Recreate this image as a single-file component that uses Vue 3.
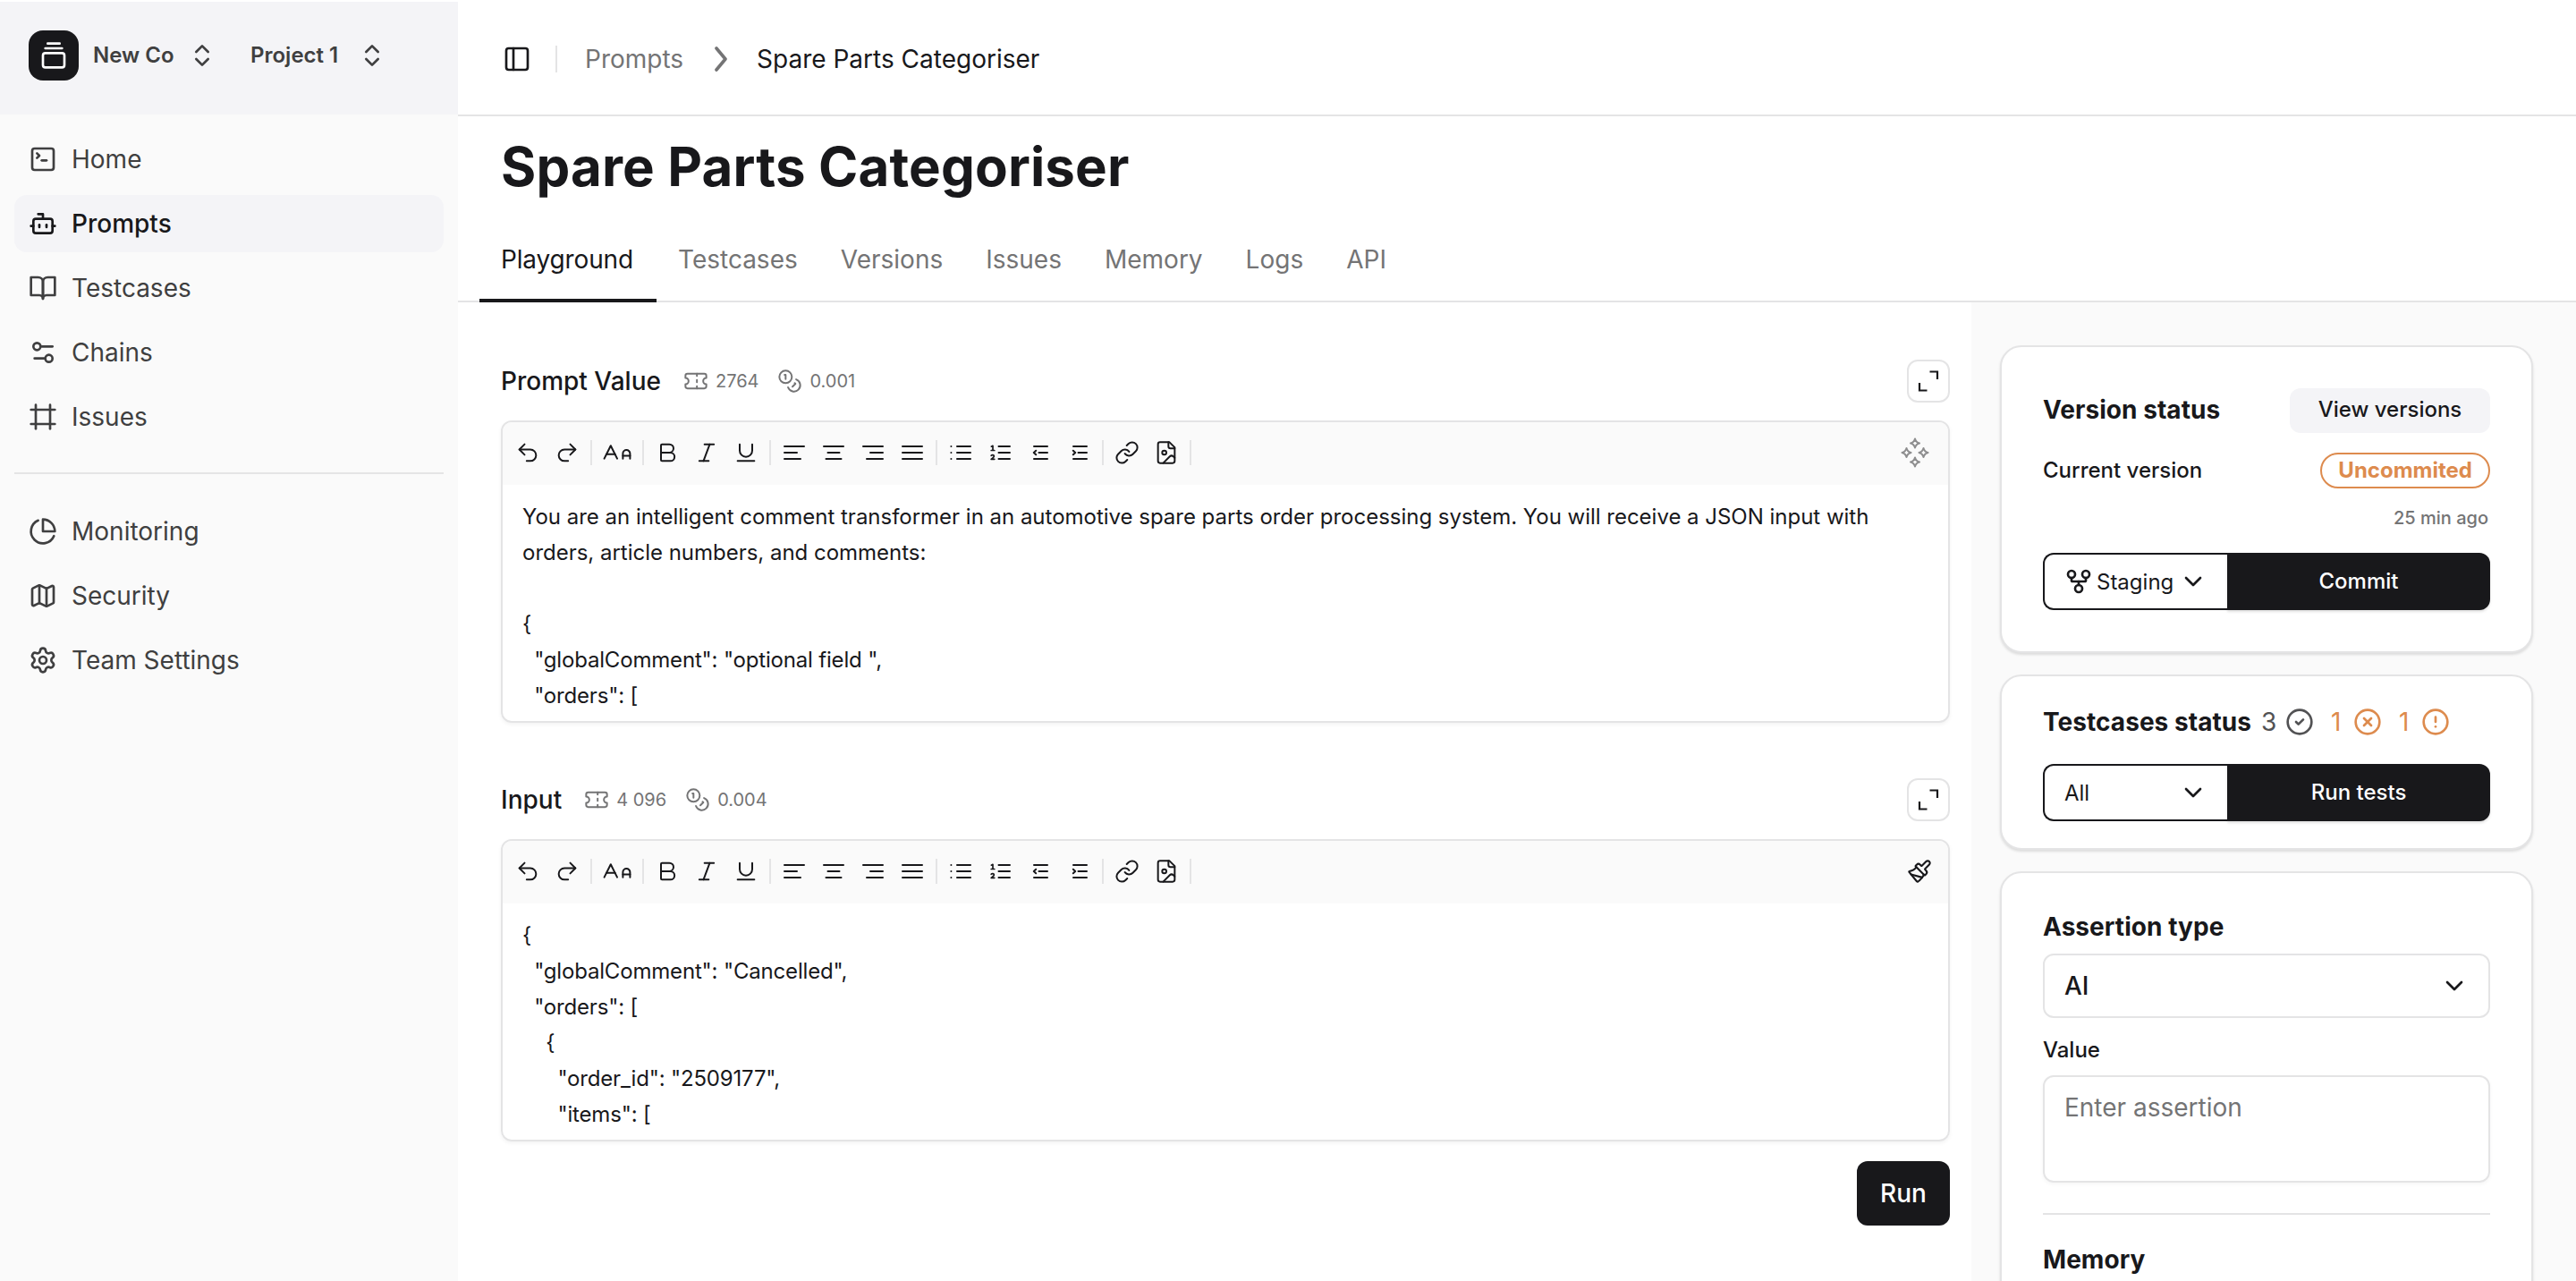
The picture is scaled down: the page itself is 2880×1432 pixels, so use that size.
<script setup>
import { h } from 'vue'

const icons = {
  stack: '<path d="M7 2h10"/><path d="M5 6h14"/><rect width="18" height="12" x="3" y="10" rx="2"/>',
  updown: '<path d="m7 15 5 5 5-5"/><path d="m7 9 5-5 5 5"/>',
  home: '<path d="m7 11 2-2-2-2"/><path d="M11 13h4"/><rect width="18" height="18" x="3" y="3" rx="2"/>',
  bot: '<path d="M12 8V4H8"/><rect width="16" height="12" x="4" y="8" rx="2"/><path d="M2 14h2"/><path d="M20 14h2"/><path d="M15 13v2"/><path d="M9 13v2"/>',
  book: '<path d="M2 3h6a4 4 0 0 1 4 4v14a3 3 0 0 0-3-3H2z"/><path d="M22 3h-6a4 4 0 0 0-4 4v14a3 3 0 0 1 3-3h7z"/>',
  chains: '<path d="M20 7h-9"/><path d="M14 17H5"/><circle cx="17" cy="17" r="3"/><circle cx="7" cy="7" r="3"/>',
  frame: '<path d="M22 6H2"/><path d="M22 18H2"/><path d="M6 2v20"/><path d="M18 2v20"/>',
  pie: '<path d="M21.21 15.89A10 10 0 1 1 8 2.83"/><path d="M22 12A10 10 0 0 0 12 2v10z"/>',
  map: '<path d="M14.106 5.553a2 2 0 0 0 1.788 0l3.659-1.83A1 1 0 0 1 21 4.619v12.764a1 1 0 0 1-.553.894l-4.553 2.277a2 2 0 0 1-1.788 0l-4.212-2.106a2 2 0 0 0-1.788 0l-3.659 1.83A1 1 0 0 1 3 19.381V6.618a1 1 0 0 1 .553-.894l4.553-2.277a2 2 0 0 1 1.788 0z"/><path d="M15 5.764v15"/><path d="M9 3.236v15"/>',
  gear: '<path d="M9.671 4.136a2.34 2.34 0 0 1 4.659 0 2.34 2.34 0 0 0 3.319 1.915 2.34 2.34 0 0 1 2.33 4.033 2.34 2.34 0 0 0 0 3.831 2.34 2.34 0 0 1-2.33 4.033 2.34 2.34 0 0 0-3.319 1.915 2.34 2.34 0 0 1-4.659 0 2.34 2.34 0 0 0-3.32-1.915 2.34 2.34 0 0 1-2.33-4.033 2.34 2.34 0 0 0 0-3.831A2.34 2.34 0 0 1 6.35 6.051a2.34 2.34 0 0 0 3.319-1.915"/><circle cx="12" cy="12" r="3"/>',
  panel: '<rect width="18" height="18" x="3" y="3" rx="2"/><path d="M9 3v18"/>',
  chevRight: '<path d="m2 2 10 12L2 26"/>',
  ticket: '<path d="M2 9a3 3 0 0 1 0 6v2a2 2 0 0 0 2 2h16a2 2 0 0 0 2-2v-2a3 3 0 0 1 0-6V7a2 2 0 0 0-2-2H4a2 2 0 0 0-2 2Z"/><path d="M13 5v2"/><path d="M13 17v2"/><path d="M13 11v2"/>',
  coins: '<circle cx="8" cy="8" r="6"/><path d="M18.09 10.37A6 6 0 1 1 10.34 18"/><path d="M7 6h1v4"/><path d="m16.71 13.88.7.71-2.82 2.82"/>',
  undo: '<path d="M9 14 4 9l5-5"/><path d="M4 9h10.5a5.5 5.5 0 0 1 0 11H11"/>',
  redo: '<path d="m15 14 5-5-5-5"/><path d="M20 9H9.5a5.5 5.5 0 0 0 0 11H13"/>',
  aa: '<path d="M21 14h-5"/><path d="M16 16v-3.5a2.5 2.5 0 0 1 5 0V16"/><path d="M4.5 13h6"/><path d="m3 16 4.5-9 4.5 9"/>',
  bold: '<path d="M6 12h9a4 4 0 0 1 0 8H7a1 1 0 0 1-1-1V5a1 1 0 0 1 1-1h7a4 4 0 0 1 0 8"/>',
  italic: '<path d="M19 4h-9"/><path d="M14 20H5"/><path d="M15 4 9 20"/>',
  underline: '<path d="M6 4v6a6 6 0 0 0 12 0V4"/><path d="M4 20h16"/>',
  left: '<path d="M3 7h22M3 14h14M3 21h18"/>',
  center: '<path d="M3 7h22M7.5 14h13M5.500 21h17"/>',
  right: '<path d="M3 7h22M11 14h14M7 21h18"/>',
  justify: '<path d="M3 7h22M3 14h22M3 21h22"/>',
  ul: '<path d="M10 7h15M10 14h15M10 21h15M3.400 7h.01M3.400 14h.01M3.400 21h.01"/>',
  ol: '<path d="M12.500 7h12.500M12.500 14h12.500M12.500 21h12.500"/><path stroke-width="1.700" d="M4.300 7.200 6 6.300v5M4.200 11.500h3.600M4.200 17.300c.8-1 3.200-.8 3.200.6 0 1.200-1.600 1.900-3.200 3.400h3.600"/>',
  outdent: '<path d="M8 7h15M13.500 14H23M8 21h15M10.200 11.800 7.800 14l2.400 2.200"/>',
  indent: '<path d="M8 7h15M13.500 14H23M8 21h15M7.800 11.800l2.400 2.200-2.400 2.200"/>',
  link: '<path d="M10 13a5 5 0 0 0 7.540.54l3-3a5 5 0 0 0-7.070-7.070l-1.720 1.710"/><path d="M14 11a5 5 0 0 0-7.540-.54l-3 3a5 5 0 0 0 7.070 7.070l1.710-1.710"/>',
  image: '<path d="M15 2H6a2 2 0 0 0-2 2v16a2 2 0 0 0 2 2h12a2 2 0 0 0 2-2V7Z"/><path d="M14 2v4a2 2 0 0 0 2 2h4"/><circle cx="10" cy="12" r="2"/><path d="m20 17-1.296-1.296a2.410 2.410 0 0 0-3.408 0L9 22"/>',
  sparkles: '<path d="M19 3.500q1 4 5 5-4 1-5 5-1-4-5-5 4-1 5-5ZM19 24.500q1 4 5 5-4 1-5 5-1-4-5-5 4-1 5-5ZM9.500 14q1 4 5 5-4 1-5 5-1-4-5-5 4-1 5-5ZM28.500 14q1 4 5 5-4 1-5 5-1-4-5-5 4-1 5-5Z"/>',
  brush: '<path d="m14.622 17.897-10.680-2.913"/><path d="M18.376 2.622a1 1 0 1 1 3.002 3.002L17.360 9.643a.5.5 0 0 0 0 .707l.944.944a2.410 2.410 0 0 1 0 3.408l-.944.944a.5.5 0 0 1-.707 0L8.354 7.348a.5.5 0 0 1 0-.707l.944-.944a2.410 2.410 0 0 1 3.408 0l.944.944a.5.5 0 0 0 .707 0z"/><path d="M9 8c-1.804 2.710-3.970 3.460-6.583 3.948a.507.507 0 0 0-.302.819l7.320 8.883a1 1 0 0 0 1.185.204C12.735 20.405 16 16.792 16 15"/>',
  expand: '<path d="M13.500 2H22v8.500M2 14.500V23h8.500"/>',
  fork: '<circle cx="12" cy="18" r="3"/><circle cx="6" cy="6" r="3"/><circle cx="18" cy="6" r="3"/><path d="M18 9v2c0 .6-.4 1-1 1H7c-.6 0-1-.4-1-1V9"/><path d="M12 12v3"/>',
  chevDown: '<path d="m6 9 6 6 6-6"/>',
  check: '<circle cx="12" cy="12" r="10"/><path d="m9 12 2 2 4-4"/>',
  cross: '<circle cx="12" cy="12" r="10"/><path d="m15 9-6 6"/><path d="m9 9 6 6"/>',
  alert: '<circle cx="12" cy="12" r="10"/><path d="M12 8v4"/><path d="M12 16h.01"/>',
}

// w/hgt: drawn size in px, sw: stroke width in viewBox units
const Icon = ({ name, w = 32, hgt = w, vb = '0 0 24 24', sw = 2, cap = 'round' }) =>
  h('svg', {
    class: 'icon', width: w, height: hgt, viewBox: vb, fill: 'none',
    stroke: 'currentColor', 'stroke-width': sw, 'stroke-linecap': cap,
    'stroke-linejoin': cap === 'round' ? 'round' : 'miter',
    style: 'flex:none;display:block', innerHTML: icons[name],
  })
Icon.props = ['name', 'w', 'hgt', 'vb', 'sw', 'cap']

const nav = [
  { label: 'Home', icon: 'home' },
  { label: 'Prompts', icon: 'bot', active: true },
  { label: 'Testcases', icon: 'book' },
  { label: 'Chains', icon: 'chains' },
  { label: 'Issues', icon: 'frame' },
]
const nav2 = [
  { label: 'Monitoring', icon: 'pie' },
  { label: 'Security', icon: 'map' },
  { label: 'Team Settings', icon: 'gear' },
]
const tabs = ['Playground', 'Testcases', 'Versions', 'Issues', 'Memory', 'Logs', 'API']

const a = (name) => ({ name, w: 28, sw: 1.7 })
const b = (name) => ({ name, w: 28, vb: '0 0 28 28', sw: 2 })
const tools = [
  [a('undo'), a('redo')],
  [{ name: 'aa', w: 32, hgt: 20, vb: '2 5.600 20 12.500', sw: 1.25 }],
  [a('bold'), a('italic'), a('underline')],
  [b('left'), b('center'), b('right'), b('justify')],
  [b('ul'), b('ol'), b('outdent'), b('indent')],
  [a('link'), a('image')],
]

const editors = [
  {
    title: 'Prompt Value', tokens: '2764', cost: '0.001',
    action: { name: 'sparkles', w: 38, vb: '0 0 38 38', sw: 2 }, muted: true,
    prose: 'You are an intelligent comment transformer in an automotive spare parts order processing system. You will receive a JSON input with orders, article numbers, and comments:\n\n',
    json: '{\n  "globalComment": "optional field ",\n  "orders": [',
  },
  {
    title: 'Input', tokens: '4 096', cost: '0.004',
    action: { name: 'brush', w: 28, sw: 1.8 }, muted: false,
    prose: '',
    json: '{\n  "globalComment": "Cancelled",\n  "orders": [\n    {\n      "order_id": "2509177",\n      "items": [',
  },
]
</script>

<template>
  <div class="app">
    <aside class="sidebar">
      <header class="switcher">
        <span class="logo"><Icon name="stack" /></span>
        <button class="switch company"><span>New Co</span><Icon name="updown" /></button>
        <button class="switch project"><span>Project 1</span><Icon name="updown" /></button>
      </header>
      <nav class="nav">
        <a v-for="n in nav" :key="n.label" class="nav-item" :class="{ active: n.active }">
          <Icon :name="n.icon" />{{ n.label }}
        </a>
      </nav>
      <hr class="nav-sep" />
      <nav class="nav second">
        <a v-for="n in nav2" :key="n.label" class="nav-item"><Icon :name="n.icon" />{{ n.label }}</a>
      </nav>
    </aside>

    <div class="page">
      <header class="crumbs">
        <Icon name="panel" />
        <i class="crumb-sep"></i>
        <span class="crumb muted">Prompts</span>
        <Icon class="crumb-chev" name="chevRight" :w="18" :hgt="28" vb="-1 0 18 28" :sw="3.6" />
        <span class="crumb">Spare Parts Categoriser</span>
      </header>

      <section class="heading">
        <h1>Spare Parts Categoriser</h1>
        <div class="tabs">
          <a v-for="(t, i) in tabs" :key="t" class="tab" :class="{ active: i === 0 }">{{ t }}</a>
        </div>
      </section>

      <div class="body">
        <main class="work">
          <section v-for="e in editors" :key="e.title" class="block">
            <div class="block-head">
              <h2>{{ e.title }}</h2>
              <span class="stat"><Icon name="ticket" :w="28" :sw="1.7" />{{ e.tokens }}</span>
              <span class="stat cost"><Icon name="coins" :w="28" :sw="1.7" />{{ e.cost }}</span>
              <button class="expand"><Icon name="expand" :w="24" :hgt="24" vb="0 .5 24 24" :sw="2.2" cap="butt" /></button>
            </div>
            <div class="editor">
              <div class="toolbar">
                <div v-for="(g, gi) in tools" :key="gi" class="group">
                  <Icon v-for="t in g" :key="t.name" v-bind="t" />
                </div>
                <span class="action" :class="{ dim: e.muted }"><Icon v-bind="e.action" /></span>
              </div>
              <div class="text"><span class="prose">{{ e.prose }}</span><span class="json">{{ e.json }}</span></div>
            </div>
          </section>
          <button class="run">Run</button>
        </main>

        <aside class="panel">
          <section class="card version">
            <div class="row">
              <h3>Version status</h3>
              <button class="view">View versions</button>
            </div>
            <div class="row current">
              <span class="label">Current version</span>
              <span class="badge">Uncommited</span>
            </div>
            <div class="ago">25 min ago</div>
            <div class="split">
              <button class="pick"><span class="branch"><Icon name="fork" />Staging</span><Icon name="chevDown" /></button>
              <button class="go">Commit</button>
            </div>
          </section>

          <section class="card tests">
            <div class="row status">
              <h3>Testcases status</h3>
              <span class="count ok">3<Icon name="check" /></span>
              <span class="count bad">1<Icon name="cross" /></span>
              <span class="count bad">1<Icon name="alert" /></span>
            </div>
            <div class="split">
              <button class="pick">All<Icon name="chevDown" /></button>
              <button class="go">Run tests</button>
            </div>
          </section>

          <section class="card assertion">
            <h3>Assertion type</h3>
            <div class="select">AI<Icon name="chevDown" /></div>
            <div class="label">Value</div>
            <div class="area">Enter assertion</div>
            <hr />
            <h3>Memory</h3>
          </section>
        </aside>
      </div>
    </div>
  </div>
</template>

<style>
html, body { margin: 0; background: #fff; overflow: hidden; }
</style>

<style scoped>
* { box-sizing: border-box; }
.app {
  width: 2880px; height: 1432px; padding-top: 2px; overflow: hidden;
  display: flex; background: #fff; color: #18181b;
  font-family: Inter, "Liberation Sans", sans-serif; font-size: 28px;
}
button { font: inherit; color: inherit; border: 0; background: none; padding: 0; margin: 0; }
h1, h2, h3, hr { margin: 0; border: 0; }

.sidebar { width: 512px; flex: none; background: #fafafa; }
.switcher {
  height: 126px; padding: 32px 32px 0; display: flex; align-items: flex-start;
  background: #f4f4f7;
}
.logo {
  width: 56px; height: 56px; border-radius: 16px; background: #18181b; color: #fff;
  display: flex; align-items: center; justify-content: center;
}
.switch {
  display: flex; align-items: center; justify-content: space-between; height: 56px;
  font-size: 24px; font-weight: 600; color: #3f3f40; white-space: nowrap;
}
.switch span { padding-bottom: 2px; }
.company { margin-left: 16px; width: 138px; }
.project { margin-left: 38px; width: 152px; }
.nav { padding: 18px 16px 0; display: flex; flex-direction: column; gap: 8px; }
.nav.second { padding-top: 32px; }
.nav-item {
  height: 64px; border-radius: 14px; padding-left: 16px;
  display: flex; align-items: center; gap: 16px; color: #3f3f40;
}
.nav-item.active { background: #f4f4f7; color: #18181b; font-weight: 500; }
.nav-sep { height: 2px; background: #e4e4e5; margin: 30px 16px 0; }

.page { flex: 1; min-width: 0; display: flex; flex-direction: column; }
.crumbs {
  height: 128px; border-bottom: 2px solid #e4e4e5; padding: 2px 50px 0;
  display: flex; align-items: center;
}
.crumb-sep { width: 2px; height: 30px; background: #e4e4e5; margin: 0 31px 0 27px; }
.crumb.muted { color: #747475; }
.crumb-chev { color: #747475; margin: 0 30px 0 34px; }

.heading { height: 208px; flex: none; border-bottom: 2px solid #e4e4e5; padding-left: 24px; }
h1 { font-size: 60px; line-height: 72px; font-weight: 700; letter-spacing: .14px; padding: 20px 24px 0; }
.tabs { display: flex; margin-top: 16px; }
.tab {
  height: 100px; padding: 35px 24px 0; line-height: 34px; color: #747475;
}
.tab.active { width: 198px; color: #18181b; border-bottom: 4px solid #18181b; letter-spacing: -.15px; }

.body { flex: 1; display: flex; min-height: 0; }
.work { width: 1692px; padding: 64px 24px 0 48px; display: flex; flex-direction: column; }
.block { margin-bottom: 62px; }
.block-head { height: 48px; display: flex; align-items: center; margin-bottom: 20px; }
h2 { font-size: 28px; font-weight: 500; margin-right: 5px; }
.stat {
  display: flex; align-items: center; gap: 8px; margin-left: 20px;
  font-size: 20px; color: #747475;
}
.stat.cost { margin-left: 21px; }
.expand {
  margin-left: auto; width: 48px; height: 48px; border: 2px solid #e4e4e5; border-radius: 12px;
  display: flex; align-items: center; justify-content: center;
}
.editor {
  height: 338px; border: 2px solid #e4e4e5; border-radius: 12px; overflow: hidden;
  box-shadow: 0 2px 4px rgba(0, 0, 0, .05);
}
.toolbar {
  height: 70px; background: #fafafa; display: flex; align-items: center; padding: 0 18px 2px 2px;
}
.group {
  height: 28px; display: flex; align-items: center; gap: 16px; padding: 0 12px;
  border-right: 2px solid #e4e4e5;
}
.action { margin-left: auto; }
.action.dim { color: #8e8e8f; }
.text { padding: 16px 22px; font-size: 24px; line-height: 40px; white-space: pre-wrap; }
.prose { letter-spacing: -.015px; }
.json { letter-spacing: -.18px; }
.run {
  align-self: flex-end; width: 104px; height: 72px; margin-top: -40px; border-radius: 12px;
  background: #18181b; color: #fff; font-weight: 500;
}

.panel {
  flex: 1; background: #fafafa; padding: 48px 48px 0 32px; min-height: 0; overflow: hidden;
  display: flex; flex-direction: column; gap: 24px;
}
.card {
  flex: none; background: #fff; border: 2px solid #e4e4e5; border-radius: 24px;
  padding: 46px; box-shadow: 0 2px 3px rgba(0, 0, 0, .12);
}
.row { display: flex; align-items: center; justify-content: space-between; }
h3 { font-size: 28px; line-height: 34px; font-weight: 700; letter-spacing: .05px; }
.label { font-size: 24px; font-weight: 500; line-height: 30px; }
.version { height: 344px; }
.version .row:first-child { align-items: flex-start; }
.version h3 { padding-top: 7px; }
.view {
  width: 224px; height: 50px; border-radius: 12px; background: #f4f4f7;
  font-size: 24px; font-weight: 500; padding-bottom: 3px;
}
.current { margin-top: 22px; height: 40px; }
.badge {
  height: 40px; border: 2px solid #dd8b4e; border-radius: 20px; padding: 0 18px;
  color: #dd8b4e; font-size: 24px; font-weight: 700; line-height: 36px;
}
.ago {
  margin-top: 20px; height: 26px; line-height: 26px; text-align: right; padding-right: 2px;
  font-size: 20px; font-weight: 500; color: #747475;
}
.split { display: flex; height: 64px; margin-top: 26px; font-size: 24px; }
.pick {
  width: 206px; border: 2px solid #18181b; border-right: 0; border-radius: 12px 0 0 12px;
  display: flex; align-items: center; justify-content: space-between; padding: 0 22px;
}
.branch { display: flex; align-items: center; gap: 4px; }
.go {
  flex: 1; background: #18181b; color: #fff; font-weight: 500; border-radius: 0 12px 12px 0;
  box-shadow: 0 2px 3px rgba(0, 0, 0, .12); padding-bottom: 1px;
}
.tests { height: 196px; padding-top: 32px; }
.tests .status { height: 38px; justify-content: flex-start; }
.tests .split { margin-top: 28px; }
.count { display: flex; align-items: center; justify-content: space-between; margin-left: 19px; width: 57px; }
.count.ok { margin-left: 11px; width: 59px; color: #525254; }
.count.bad { color: #dd8b4e; }
.assertion { height: 600px; padding-top: 43px; }
.select {
  height: 72px; border: 2px solid #e4e4e5; border-radius: 12px; padding: 0 22px;
  margin-top: 13px; display: flex; align-items: center; justify-content: space-between;
  font-weight: 500;
}
.assertion .label { margin-top: 21px; }
.area {
  height: 120px; margin-top: 13px; border: 2px solid #e4e4e5; border-radius: 12px;
  padding: 17px 22px; line-height: 34px; color: #747475; box-shadow: 0 2px 4px rgba(0, 0, 0, .04);
}
.assertion hr { height: 2px; background: #e4e4e5; margin: 34px 0 33px; }
</style>
